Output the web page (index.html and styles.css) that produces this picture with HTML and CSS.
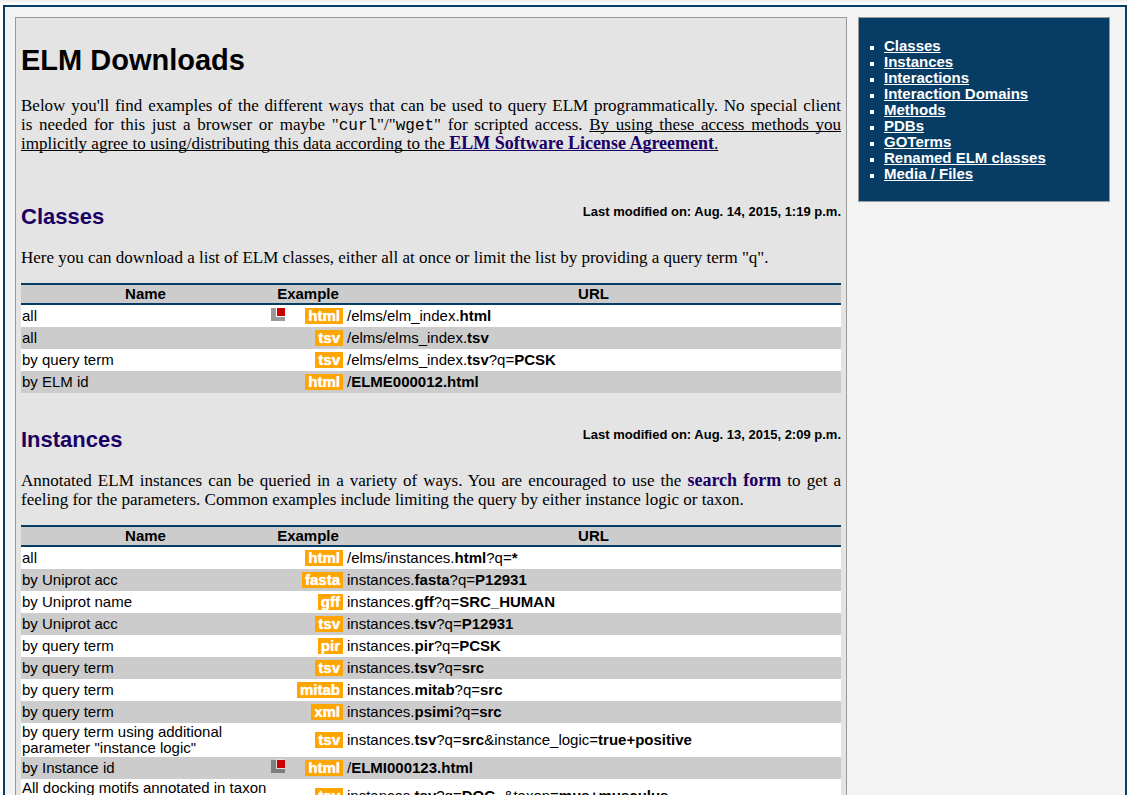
FILE: index.html
```html
<!DOCTYPE html>
<html lang="en">
<head>
<meta charset="utf-8">
<title>ELM Downloads</title>
<link rel="stylesheet" href="styles.css">
</head>
<body>
<div class="page">
  <main class="content">
    <h1>ELM Downloads</h1>
    <p>Below you'll find examples of the different ways that can be used to query ELM programmatically. No special client is&nbsp;needed for this just a browser or maybe "<code>curl</code>"/"<code>wget</code>" for scripted access. <u>By using these access methods you implicitly agree to using/distributing this data according to the <a href="#license">ELM Software License Agreement</a>.</u></p>

    <section class="block first" id="classes">
      <header class="block-head">
        <h2>Classes</h2>
        <span class="modified">Last modified on: Aug. 14, 2015, 1:19 p.m.</span>
      </header>
      <p>Here you can download a list of ELM classes, either all at once or limit the list by providing a query term "q".</p>
      <table>
        <colgroup><col class="c-name"><col class="c-example"><col></colgroup>
        <thead><tr><th>Name</th><th>Example</th><th>URL</th></tr></thead>
        <tbody>
          <tr><td>all</td><td><div class="example"><svg class="mark" viewBox="0 0 14 14" aria-hidden="true"><path fill="#999" d="M0 1h5v8h9v5H0z"/><path fill="#fff" d="M5 0h9v10H5z"/><path fill="#c00" d="M6 1h8v8H6z"/></svg><a class="badge" href="#e">html</a></div></td><td>/elms/elm_index.<b>html</b></td></tr>
          <tr><td>all</td><td><div class="example"><a class="badge" href="#e">tsv</a></div></td><td>/elms/elms_index.<b>tsv</b></td></tr>
          <tr><td>by query term</td><td><div class="example"><a class="badge" href="#e">tsv</a></div></td><td>/elms/elms_index.<b>tsv</b>?q=<b>PCSK</b></td></tr>
          <tr><td>by ELM id</td><td><div class="example"><a class="badge" href="#e">html</a></div></td><td>/<b>ELME000012.html</b></td></tr>
        </tbody>
      </table>
    </section>

    <section class="block" id="instances">
      <header class="block-head">
        <h2>Instances</h2>
        <span class="modified">Last modified on: Aug. 13, 2015, 2:09 p.m.</span>
      </header>
      <p>Annotated ELM instances can be queried in a variety of ways. You are encouraged to use the <a href="#search">search form</a> to get a feeling for the parameters. Common examples include limiting the query by either instance logic or taxon.</p>
      <table>
        <colgroup><col class="c-name"><col class="c-example"><col></colgroup>
        <thead><tr><th>Name</th><th>Example</th><th>URL</th></tr></thead>
        <tbody>
          <tr><td>all</td><td><div class="example"><a class="badge" href="#e">html</a></div></td><td>/elms/instances.<b>html</b>?q=<b>*</b></td></tr>
          <tr><td>by Uniprot acc</td><td><div class="example"><a class="badge" href="#e">fasta</a></div></td><td>instances.<b>fasta</b>?q=<b>P12931</b></td></tr>
          <tr><td>by Uniprot name</td><td><div class="example"><a class="badge" href="#e">gff</a></div></td><td>instances.<b>gff</b>?q=<b>SRC_HUMAN</b></td></tr>
          <tr><td>by Uniprot acc</td><td><div class="example"><a class="badge" href="#e">tsv</a></div></td><td>instances.<b>tsv</b>?q=<b>P12931</b></td></tr>
          <tr><td>by query term</td><td><div class="example"><a class="badge" href="#e">pir</a></div></td><td>instances.<b>pir</b>?q=<b>PCSK</b></td></tr>
          <tr><td>by query term</td><td><div class="example"><a class="badge" href="#e">tsv</a></div></td><td>instances.<b>tsv</b>?q=<b>src</b></td></tr>
          <tr><td>by query term</td><td><div class="example"><a class="badge" href="#e">mitab</a></div></td><td>instances.<b>mitab</b>?q=<b>src</b></td></tr>
          <tr><td>by query term</td><td><div class="example"><a class="badge" href="#e">xml</a></div></td><td>instances.<b>psimi</b>?q=<b>src</b></td></tr>
          <tr><td>by query term using additional parameter "instance logic"</td><td><div class="example"><a class="badge" href="#e">tsv</a></div></td><td>instances.<b>tsv</b>?q=<b>src</b>&amp;instance_logic=<b>true+positive</b></td></tr>
          <tr><td>by Instance id</td><td><div class="example"><svg class="mark" viewBox="0 0 14 14" aria-hidden="true"><path fill="#7f7f7f" d="M0 1h5v8h9v5H0z"/><path fill="#ddd" d="M5 0h9v10H5z"/><path fill="#c00" d="M6 1h8v8H6z"/></svg><a class="badge" href="#e">html</a></div></td><td>/<b>ELMI000123.html</b></td></tr>
          <tr><td>All docking motifs annotated in taxon mus musculus</td><td><div class="example"><a class="badge" href="#e">tsv</a></div></td><td>instances.<b>tsv</b>?q=<b>DOC_</b>&amp;taxon=<b>mus+musculus</b></td></tr>
        </tbody>
      </table>
    </section>
  </main>

  <nav class="sidebar">
    <ul>
      <li><a href="#classes">Classes</a></li>
      <li><a href="#instances">Instances</a></li>
      <li><a href="#interactions">Interactions</a></li>
      <li><a href="#domains">Interaction Domains</a></li>
      <li><a href="#methods">Methods</a></li>
      <li><a href="#pdbs">PDBs</a></li>
      <li><a href="#goterms">GOTerms</a></li>
      <li><a href="#renamed">Renamed ELM classes</a></li>
      <li><a href="#media">Media / Files</a></li>
    </ul>
  </nav>
</div>
</body>
</html>
```
FILE: styles.css
```css
* { box-sizing: border-box; }

body {
  margin: 0;
  padding: 5px 0 0 3px;
  background: #fff linear-gradient(#ececec, #fff) no-repeat 0 0 / 100% 4px;
  color: #000;
  font: 15px/16px "Liberation Sans", Arial, sans-serif;
}

.page {
  display: flex;
  align-items: flex-start;
  gap: 11px;
  min-height: calc(100vh - 5px);
  padding: 10px 15px 0 10px;
  border: 2px solid #073c65;
  background: #f3f3f3;
}

.content {
  flex: 1;
  min-width: 0;
  padding: 5px;
  border: 1px solid #999;
  background: #e4e4e4;
}

h1 {
  margin: 20px 0 19px;
  font-size: 29px;
  line-height: 34px;
}

p {
  margin: 0;
  font-family: Georgia, "Liberation Serif", serif;
  font-size: 17px;
  line-height: 19px;
  text-align: justify;
}

p a {
  color: #1a0063;
  font-size: 18px;
  line-height: 16px;
  font-weight: bold;
  text-decoration: none;
}

code {
  font-family: "Liberation Mono", monospace;
  font-size: 16px;
  line-height: 16px;
}

u {
  text-decoration-skip-ink: none;
}

u a {
  text-decoration: underline;
  text-decoration-skip-ink: none;
}

.block { margin-top: 34px; }
.block.first { margin-top: 51px; }

.block-head {
  display: flex;
  justify-content: space-between;
  align-items: flex-start;
  margin-bottom: 18px;
}

h2 {
  margin: 0;
  color: #1a0063;
  font-size: 22px;
  line-height: 26px;
}

.modified {
  font-size: 13px;
  font-weight: bold;
}

table {
  width: 100%;
  margin-top: 16px;
  border-spacing: 0;
  table-layout: fixed;
}

.c-name { width: 249px; }
.c-example { width: 76px; }

th {
  padding: 1px;
  border: solid #073c65;
  border-width: 2px 0;
  background: #ccc;
}

td {
  height: 22px;
  padding: 1px;
}

tbody tr { background: #fff; }
tbody tr:nth-child(even) { background: #ccc; }

.example {
  display: flex;
  align-items: center;
  padding-right: 2px;
}

.mark {
  width: 14px;
  height: 14px;
  margin-bottom: 4px;
}

.badge {
  margin-left: auto;
  padding: 0 3px;
  background: #ffa500;
  color: #fff;
  font-weight: bold;
  text-decoration: none;
  text-shadow: 0 0 1px #fff;
}

.sidebar {
  flex: 0 0 252px;
  padding: 20px 0 19px;
  border: 1px solid #999;
  background: #073c65;
}

.sidebar ul {
  margin: 0;
  padding-left: 25px;
  color: #fff;
  list-style: square;
}

.sidebar li::marker { font-size: 12px; }

.sidebar a {
  color: #fff;
  font-weight: bold;
  text-decoration-skip-ink: none;
}
```
